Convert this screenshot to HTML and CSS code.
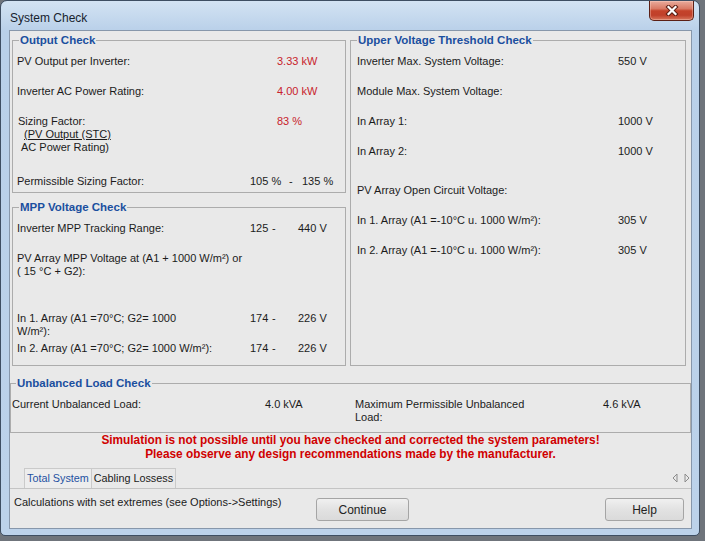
FILE: index.html
```html
<!DOCTYPE html>
<html>
<head>
<meta charset="utf-8">
<title>System Check</title>
<link rel="stylesheet" href="styles.css">
</head>
<body>
<div class="window">
  <div class="titlebar">
    <span class="title">System Check</span>
    <button class="close" aria-label="Close">
      <svg width="14" height="11" viewBox="0 0 14 11"><path d="M3.5 2 L10.5 9 M10.5 2 L3.5 9" stroke="#5a1d12" stroke-width="4.2" stroke-linecap="square" fill="none"/><path d="M3.5 2 L10.5 9 M10.5 2 L3.5 9" stroke="#ffffff" stroke-width="2.2" stroke-linecap="square" fill="none"/></svg>
    </button>
  </div>
  <div class="client">
    <div class="panels">
      <div class="col">
        <fieldset class="group output">
          <legend>Output Check</legend>
          <div class="row"><span class="lbl">PV Output per Inverter:</span><span class="val red off">3.33 kW</span></div>
          <div class="row"><span class="lbl">Inverter AC Power Rating:</span><span class="val red off">4.00 kW</span></div>
          <div class="row h60"><span class="lbl sizing">Sizing Factor:<br><span class="frac"><span class="u">(PV Output (STC)</span></span><br><span class="frac2">AC Power Rating)</span></span><span class="val red off">83 %</span></div>
          <div class="row last"><span class="lbl">Permissible Sizing Factor:</span><span class="val range pct"><span class="a">105 %</span><span class="d">-</span><span class="b">135 %</span></span></div>
        </fieldset>
        <fieldset class="group mpp">
          <legend>MPP Voltage Check</legend>
          <div class="row"><span class="lbl">Inverter MPP Tracking Range:</span><span class="val range volt"><span class="a">125</span><span class="d">-</span><span class="b">440 V</span></span></div>
          <div class="row h60"><span class="lbl">PV Array MPP Voltage at (A1 + 1000 W/m²) or<br>( 15 °C + G2):</span></div>
          <div class="row"><span class="lbl">In 1. Array (A1 =70°C; G2= 1000<br>W/m²):</span><span class="val range volt"><span class="a">174</span><span class="d">-</span><span class="b">226 V</span></span></div>
          <div class="row last"><span class="lbl">In 2. Array (A1 =70°C; G2= 1000 W/m²):</span><span class="val range volt"><span class="a">174</span><span class="d">-</span><span class="b">226 V</span></span></div>
        </fieldset>
      </div>
      <fieldset class="group upper">
        <legend>Upper Voltage Threshold Check</legend>
        <div class="row"><span class="lbl">Inverter Max. System Voltage:</span><span class="val">550 V</span></div>
        <div class="row"><span class="lbl">Module Max. System Voltage:</span></div>
        <div class="row"><span class="lbl">In Array 1:</span><span class="val">1000 V</span></div>
        <div class="row h39"><span class="lbl">In Array 2:</span><span class="val">1000 V</span></div>
        <div class="row"><span class="lbl">PV Array Open Circuit Voltage:</span></div>
        <div class="row"><span class="lbl">In 1. Array (A1 =-10°C u. 1000 W/m²):</span><span class="val">305 V</span></div>
        <div class="row"><span class="lbl">In 2. Array (A1 =-10°C u. 1000 W/m²):</span><span class="val">305 V</span></div>
      </fieldset>
    </div>

    <fieldset class="group unbalanced">
      <legend>Unbalanced Load Check</legend>
      <div class="urow">
        <span class="ulbl">Current Unbalanced Load:</span>
        <span class="uval">4.0 kVA</span>
        <span class="ulbl2">Maximum Permissible Unbalanced<br>Load:</span>
        <span class="uval">4.6 kVA</span>
      </div>
    </fieldset>

    <div class="msg">Simulation is not possible until you have checked and corrected the system parameters!<br>Please observe any design recommendations made by the manufacturer.</div>

    <div class="tabs">
      <span class="tab active">Total System</span>
      <span class="tab">Cabling Lossess</span>
      <span class="tab-arrows">
        <svg width="6" height="10" viewBox="0 0 6 10"><path d="M5 1 L1 5 L5 9 Z" fill="none" stroke="#8c8c8c" stroke-width="1"/></svg>
        <svg width="6" height="10" viewBox="0 0 6 10"><path d="M1 1 L5 5 L1 9 Z" fill="none" stroke="#8c8c8c" stroke-width="1"/></svg>
      </span>
    </div>

    <div class="status">
      <span class="status-text">Calculations with set extremes (see Options-&gt;Settings)</span>
      <button class="btn continue">Continue</button>
      <button class="btn help">Help</button>
    </div>
  </div>
</div>
</body>
</html>
```

FILE: styles.css
```css
* { box-sizing: border-box; }
html, body { margin: 0; padding: 0; }
body {
  width: 705px;
  height: 541px;
  overflow: hidden;
  background: #6f747b;
  font-family: "Liberation Sans", Arial, sans-serif;
  font-size: 11px;
  color: #1b1b1b;
}

.window {
  width: 700px;
  height: 536px;
  border: 1px solid #3e4e62;
  border-radius: 7px 7px 5px 5px;
  background: linear-gradient(#d3e3f3, #b9d0e9 30px, #bcd2ea);
  padding: 0 7px 6px 8px;
  display: flex;
  flex-direction: column;
}

.titlebar {
  height: 29px;
  margin: 0 -7px 0 -8px;
  padding-left: 9px;
  display: flex;
  align-items: flex-start;
}
.title {
  font-size: 12px;
  line-height: 14px;
  margin-top: 10px;
  color: #16222e;
}
.close {
  margin-left: auto;
  margin-right: 5px;
  width: 45px;
  height: 20px;
  padding: 0;
  border: 1px solid #5b1f15;
  border-top: 0;
  border-radius: 0 0 5px 5px;
  background: linear-gradient(#e9ab9c 0%, #d97a65 40%, #c4422a 52%, #c0402a 75%, #d8765c 100%);
  box-shadow: inset 0 0 0 1px rgba(255,220,210,0.35);
  display: flex;
  align-items: center;
  justify-content: center;
}

.client {
  height: 499px;
  border: 1px solid #8797ab;
  background: #e9e9e9;
  display: flex;
  flex-direction: column;
}

.panels {
  display: grid;
  grid-template-columns: 334px 336px;
  column-gap: 4px;
  height: 333px;
  flex-shrink: 0;
  margin: 2px 0 0 2px;
}
.col {
  display: flex;
  flex-direction: column;
  gap: 7px;
}

.group {
  margin: 0;
  min-width: 0;
  border: 1px solid #acacac;
  padding: 8px 4px 4px 4px;
}
.group > legend {
  font-weight: bold;
  font-size: 11.5px;
  line-height: 14px;
  color: #1b4f9f;
  padding: 0 1px;
  margin-left: 2px;
}
.group.mpp { flex: 1; }
.group.upper { padding-left: 6px; }
.group.upper > legend { margin-left: 0; }

.row {
  display: flex;
  min-height: 30px;
  line-height: 13px;
  align-items: flex-start;
}
.row.h60 { min-height: 60px; }
.row.h39 { min-height: 39px; }
.row.last { min-height: 0; }

.lbl { flex: 0 0 233px; }
.upper .lbl { flex-basis: 261px; }
.val { white-space: nowrap; }
.val.off { padding-left: 27px; }
.red { color: #c8232c; }

.sizing { padding-left: 1px; }
.frac { padding-left: 6px; }
.u { text-decoration: underline; }
.frac2 { padding-left: 3px; }

.range { display: flex; }
.range.pct .a { width: 39px; }
.range.pct .d { width: 13px; }
.range.volt .a { width: 22px; }
.range.volt .d { width: 26px; }

.group.unbalanced {
  margin-top: 10px;
  padding: 8px 1px 8px 1px;
  flex-shrink: 0;
}
.group.unbalanced > legend { margin-left: 4px; }
.urow {
  display: flex;
  line-height: 13px;
}
.ulbl { flex: 0 0 253px; }
.uval { flex: 0 0 90px; }
.ulbl2 { flex: 0 0 248px; }

.msg {
  text-align: center;
  font-weight: bold;
  color: #d00000;
  line-height: 14px;
  font-size: 11.85px;
  flex-shrink: 0;
}

.tabs {
  margin-top: 7px;
  height: 21px;
  flex-shrink: 0;
  display: flex;
  align-items: flex-end;
  padding-left: 14px;
  border-bottom: 1px solid #c4c4c4;
}
.tab {
  height: 20px;
  line-height: 19px;
  padding: 0 2px;
  border: 1px solid #cacaca;
  border-bottom: 0;
  color: #1b1b1b;
  background: #e9e9e9;
  font-size: 10.8px;
}
.tab + .tab { border-left: 0; }
.tab.active { color: #1f51a2; background: #ededed; }
.tab-arrows {
  margin-left: auto;
  margin-right: 1px;
  align-self: center;
  display: flex;
  gap: 6px;
}

.status {
  flex: 1;
  display: flex;
  align-items: flex-start;
  padding: 0 7px 0 4px;
}
.status-text {
  flex: 0 0 302px;
  font-size: 11px;
  line-height: 14px;
  margin-top: 6px;
}
.btn {
  margin-top: 9px;
  height: 23px;
  padding: 0;
  border: 1px solid #a5a5a5;
  border-radius: 3px;
  background: linear-gradient(#f0f0f0, #e2e2e2 50%, #dadada);
  font-family: "Liberation Sans", Arial, sans-serif;
  font-size: 12px;
  color: #222;
}
.continue { width: 93px; }
.help { width: 79px; margin-left: auto; }
```
